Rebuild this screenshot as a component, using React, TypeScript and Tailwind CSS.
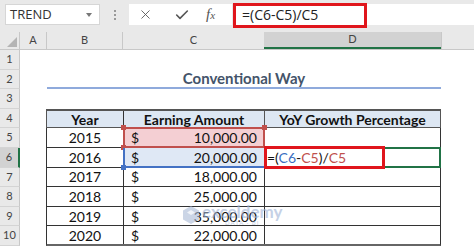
import { X, Check } from 'lucide-react';

const font = { fontFamily: 'Lato, "Open Sans", sans-serif' };

const years = [
  { y: '2015', amt: '10,000.00' },
  { y: '2016', amt: '20,000.00' },
  { y: '2017', amt: '18,000.00' },
  { y: '2018', amt: '25,000.00' },
  { y: '2019', amt: '35,000.00' },
  { y: '2020', amt: '22,000.00' },
];

function RowNum({ n, active }: { n: number; active?: boolean }) {
  return (
    <div
      className={`w-[20px] shrink-0 flex items-center justify-center text-[11px] text-[#444] border-b border-[#d4d4d4] ${
        active ? 'bg-[#d2d2d2] border-r-2 border-r-[#217346]' : 'bg-[#e9e9e9] border-r border-r-[#c8c8c8]'
      }`}
    >
      {n}
    </div>
  );
}

export default function App() {
  return (
    <div className="w-[474px] h-[248px] overflow-hidden bg-white relative" style={font}>
      {/* formula bar */}
      <div className="h-[32px] bg-[#e9e9e9] flex items-start pt-[4px] pl-[5px]">
        <div className="w-[95px] h-[21px] bg-white border border-[#d6d6d6] flex items-center px-[4px] text-[13px] text-[#333]">
          <span style={{ fontFamily: '"Open Sans", sans-serif' }}>TREND</span>
          <span className="ml-auto mr-[3px] w-0 h-0 border-l-[3px] border-r-[3px] border-t-[4px] border-l-transparent border-r-transparent border-t-[#777]" />
        </div>
        <div className="w-[29px] h-[21px] flex flex-col items-center justify-center gap-[2px]">
          <span className="w-[2px] h-[2px] bg-[#999]" />
          <span className="w-[2px] h-[2px] bg-[#999]" />
          <span className="w-[2px] h-[2px] bg-[#999]" />
        </div>
        <div className="w-[103px] h-[21px] bg-white flex items-center text-[#555]">
          <X size={15} strokeWidth={1.4} className="ml-[9px]" />
          <Check size={16} strokeWidth={2.4} className="ml-[21px]" />
          <span className="ml-[16px] italic text-[15px]" style={{ fontFamily: '"Liberation Serif", serif' }}>
            f<span className="text-[11px]">x</span>
          </span>
        </div>
        <div className="flex-1 h-[21px] bg-white ml-[1px] flex items-center pl-[9px] text-[14px] text-[#222]" style={{ fontFamily: '"Open Sans", sans-serif' }}>
          =(C6-C5)/C5
        </div>
      </div>
      <div className="absolute left-[233px] top-[3px] w-[134px] h-[25px] border-[3px] border-[#e0161c]" />

      {/* column headers */}
      <div className="h-[18px] flex bg-[#e9e9e9] text-[11px] text-[#444] border-b border-[#c8c8c8]">
        <div className="w-[20px] relative border-r border-[#c8c8c8]">
          <span className="absolute right-[2px] bottom-[2px] w-0 h-0 border-l-[10px] border-t-[10px] border-l-transparent border-t-transparent border-b-0 border-r-0" style={{ borderBottom: '10px solid #b4b4b4', borderLeft: '10px solid transparent', borderTop: 0 }} />
        </div>
        <div className="w-[27px] flex items-center justify-center border-r border-[#c8c8c8]">A</div>
        <div className="w-[76px] flex items-center justify-center border-r border-[#c8c8c8]">B</div>
        <div className="w-[141px] flex items-center justify-center">C</div>
        <div className="w-[177px] flex items-center justify-center bg-[#d2d2d2] border-b-2 border-[#217346]">D</div>
        <div className="flex-1 border-l border-[#c8c8c8]" />
      </div>

      {/* sheet */}
      <div className="flex flex-col text-[14px] text-[#111]">
        <div className="h-[19.6px] flex">
          <RowNum n={1} />
        </div>
        <div className="h-[19.6px] flex">
          <RowNum n={2} />
          <div className="w-[27px]" />
          <div className="w-[394px] flex items-center justify-center font-bold text-[15px] text-[#44546a] border-b-2 border-[#8faadc]">
            Conventional Way
          </div>
        </div>
        <div className="h-[19.6px] flex">
          <RowNum n={3} />
        </div>
        <div className="h-[19.6px] flex">
          <RowNum n={4} />
          <div className="w-[26px]" />
          <div className="w-[395px] flex bg-[#dde7f3] border-t-2 border-l border-r border-b border-[#555] font-bold">
            <div className="w-[77px] flex items-center justify-center border-r border-[#333]">Year</div>
            <div className="w-[141px] flex items-center justify-center border-r border-[#555]">Earning Amount</div>
            <div className="flex-1 flex items-center justify-center">YoY Growth Percentage</div>
          </div>
        </div>
        {years.map((r, i) => {
          const n = i + 5;
          const red = i === 0;
          const blue = i === 1;
          return (
            <div key={r.y} className="h-[19.6px] flex">
              <RowNum n={n} active={n === 6} />
              <div className="w-[26px]" />
              <div className={`w-[395px] flex border-l border-r border-b border-[#333] ${i === 5 ? 'border-b-2 border-b-[#666]' : ''}`}>
                <div className="w-[77px] flex items-center justify-center border-r border-[#333]">{r.y}</div>
                <div
                  className={`w-[141px] flex items-center px-[7px] relative ${
                    red ? 'bg-[#f4cfd3] border-r border-[#333]' : blue ? 'bg-[#dfe8f5] border-r border-[#333]' : 'border-r border-[#333]'
                  }`}
                >
                  <span>$</span>
                  <span className="ml-auto">{r.amt}</span>
                  {red && (
                    <>
                      <span className="absolute inset-[-1px] border-2 border-[#c0504d]" />
                      <span className="absolute left-[-3px] top-[-3px] w-[5px] h-[5px] bg-[#c0504d]" />
                      <span className="absolute right-[-3px] top-[-3px] w-[5px] h-[5px] bg-[#c0504d]" />
                      <span className="absolute left-[-3px] bottom-[-3px] w-[5px] h-[5px] bg-[#c0504d]" />
                    </>
                  )}
                  {blue && (
                    <>
                      <span className="absolute left-[-1px] top-0 bottom-[-1px] w-[2px] bg-[#4472c4]" />
                      <span className="absolute left-[-1px] right-0 bottom-[-1px] h-[2px] bg-[#4472c4]" />
                      <span className="absolute left-[-3px] bottom-[-3px] w-[5px] h-[5px] bg-[#4472c4]" />
                    </>
                  )}
                </div>
                <div className="flex-1 flex items-center relative">
                  {blue && (
                    <>
                      <span className="absolute inset-[-1px] border-2 border-[#217346]" />
                      <span className="pl-[2px]">
                        =(<span className="text-[#3b6fc2]">C6</span>-<span className="text-[#c0504d]">C5</span>)/<span className="text-[#c0504d]">C5</span>
                      </span>
                    </>
                  )}
                </div>
              </div>
            </div>
          );
        })}
      </div>

      {/* annotation on D6 */}
      <div className="absolute left-[264px] top-[146px] w-[121px] h-[23px] border-[3px] border-[#e0161c]" />

      {/* watermark */}
      <div className="absolute left-[183px] top-[203px] flex items-center gap-[3px] opacity-60 pointer-events-none">
        <svg width="16" height="18" viewBox="0 0 16 18">
          <path d="M8 0 L16 4.5 L16 13.5 L8 18 L0 13.5 L0 4.5 Z" fill="#a9bad6" />
          <path d="M8 4 L12 6.5 L8 9 L4 6.5 Z" fill="#e6ecf5" />
        </svg>
        <div className="flex flex-col leading-none">
          <span className="text-[17px] font-bold text-[#9fb3d6]">exceldemy</span>
          <span className="text-[6px] text-[#9fb3d6] tracking-[1px] self-center">DATA · BI</span>
        </div>
      </div>
    </div>
  );
}
